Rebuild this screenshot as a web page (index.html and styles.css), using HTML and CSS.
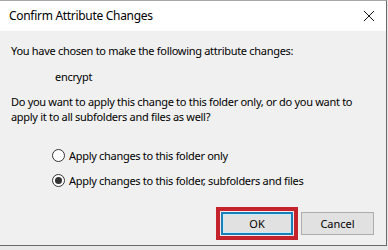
FILE: index.html
```html
<!DOCTYPE html>
<html lang="en">
<head>
  <meta charset="UTF-8" />
  <title>Confirm Attribute Changes</title>
  <link rel="stylesheet" href="styles.css">
</head>
<body>

  <div class="dialog">
    <div class="titlebar">
      <span class="title">Confirm Attribute Changes</span>
      <svg class="close" width="12" height="12" viewBox="0 0 12 12">
        <path d="M1 1 L11 11 M11 1 L1 11" stroke="#111" stroke-width="1" fill="none" />
      </svg>
    </div>

    <div class="content">
      <p class="msg">You have chosen to make the following attribute changes:</p>
      <p class="attr">encrypt</p>
      <p class="question">Do you want to apply this change to this folder only, or do you want to<br>apply it to all subfolders and files as well?</p>

      <div class="options">
        <label class="option"><span class="radio"></span>Apply changes to this folder only</label>
        <label class="option"><span class="radio checked"></span>Apply changes to this folder, subfolders and files</label>
      </div>

      <div class="buttons">
        <div class="highlight">
          <button class="btn default">OK</button>
        </div>
        <button class="btn">Cancel</button>
      </div>
    </div>
  </div>

</body>
</html>
```

FILE: styles.css
```css
:root {
  --face: #f0f0f0;
  --text: #000;
  --btn: #e1e1e1;
  --btn-border: #adadad;
  --mark: #c4232b;
  --font: 'Noto Sans', 'Open Sans', sans-serif;
}

* {
  box-sizing: border-box;
}

html {
  background: #e8e8e8;
}

body {
  margin: 0;
  font-family: var(--font);
  font-size: 11px;
  letter-spacing: -0.3px;
  color: var(--text);
}

.dialog {
  width: 387px;
  height: 246px;
  background: var(--face);
  border-top: 1px solid #a8a8a8;
  border-right: 1px solid #6a6a6a;
  border-bottom: 1px solid #6a6a6a;
  display: flex;
  flex-direction: column;
}

.titlebar {
  height: 30px;
  background: #fff;
  display: flex;
  align-items: center;
  justify-content: space-between;
  padding: 0 11px 0 9px;
}

.title {
  font-size: 12px;
  padding-bottom: 1px;
}

.close {
  display: block;
}

.content {
  flex: 1;
  padding: 12px 11px 0 11px;
  display: flex;
  flex-direction: column;
}

p {
  margin: 0;
  line-height: 15px;
}

.attr {
  margin-top: 11px;
  padding-left: 44px;
}

.question {
  margin-top: 10px;
}

.options {
  margin-top: 24px;
  padding-left: 41px;
  display: flex;
  flex-direction: column;
  gap: 10px;
}

.option {
  display: flex;
  align-items: center;
  gap: 4px;
  line-height: 15px;
}

.radio {
  width: 13px;
  height: 13px;
  border: 1px solid #333;
  border-radius: 50%;
  background: #fff;
  display: flex;
  align-items: center;
  justify-content: center;
}

.radio.checked::after {
  content: '';
  width: 7px;
  height: 7px;
  border-radius: 50%;
  background: #333;
}

.buttons {
  margin-top: auto;
  margin-bottom: 5px;
  display: flex;
  justify-content: flex-end;
  align-items: center;
  gap: 3px;
  padding-right: 1px;
}

.highlight {
  border: 4px solid var(--mark);
  padding: 1px;
  background: #f6e9ea;
}

.btn {
  width: 73px;
  height: 23px;
  font-family: var(--font);
  font-size: 11px;
  color: var(--text);
  background: var(--btn);
  border: 1px solid var(--btn-border);
  padding: 0;
}

.btn.default {
  width: 72px;
  border: 2px solid #1a7fb8;
  box-shadow: inset 0 0 0 1px #c7ecfb;
}
```
